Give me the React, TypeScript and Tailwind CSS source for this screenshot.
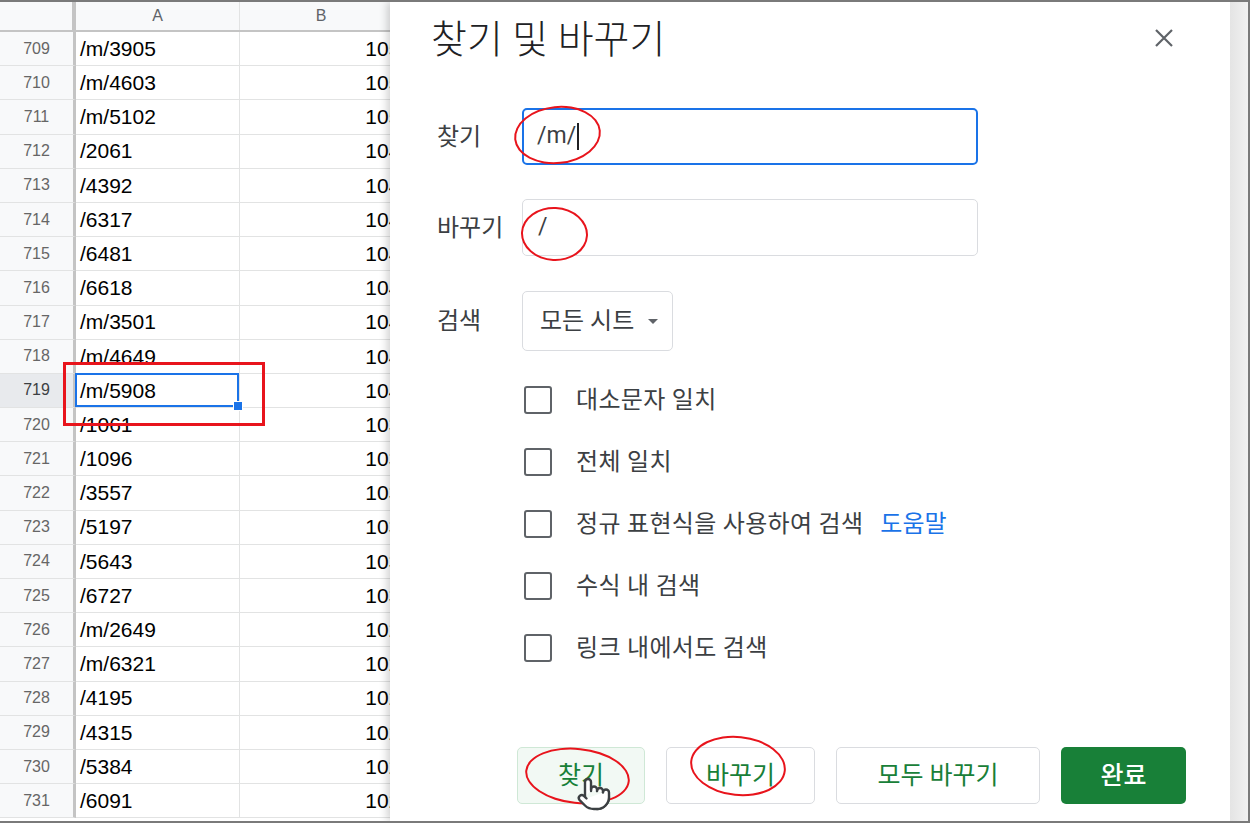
import React from "react";
import { Pointer } from "lucide-react";

// --- SHEET DATA ---
const ROWS: [number, string, string][] = [
  [709, "/m/3905", "1054"],
  [710, "/m/4603", "1053"],
  [711, "/m/5102", "1053"],
  [712, "/2061", "1048"],
  [713, "/4392", "1047"],
  [714, "/6317", "1047"],
  [715, "/6481", "1046"],
  [716, "/6618", "1046"],
  [717, "/m/3501", "1045"],
  [718, "/m/4649", "1044"],
  [719, "/m/5908", "1044"],
  [720, "/1061", "1032"],
  [721, "/1096", "1032"],
  [722, "/3557", "1031"],
  [723, "/5197", "1031"],
  [724, "/5643", "1030"],
  [725, "/6727", "1030"],
  [726, "/m/2649", "1029"],
  [727, "/m/6321", "1029"],
  [728, "/4195", "1028"],
  [729, "/4315", "1028"],
  [730, "/5384", "1027"],
  [731, "/6091", "1027"],
];

const OPTIONS = ["대소문자 일치", "전체 일치", "정규 표현식을 사용하여 검색", "수식 내 검색", "링크 내에서도 검색"];

export default function App() {
  return (
    <div className="relative h-[823px] w-[1250px] overflow-hidden border-y-2 border-r-2 border-[#7a7a7a] bg-white">
      {/* SPREADSHEET */}
      <Sheet />

      {/* red box on sheet */}
      <div className="absolute left-[63px] top-[360px] z-20 h-[64px] w-[202px] border-[3px] border-[#e8141c]" />

      {/* FIND & REPLACE DIALOG */}
      <div className="absolute bottom-0 left-[390px] right-0 top-0 z-30 flex shadow-[-3px_0_8px_rgba(0,0,0,0.18)]">
        <div className="flex flex-1 flex-col bg-white font-[Roboto,'Noto_Sans_CJK_KR',sans-serif]">
          <div className="mt-[14px] flex h-[48px] items-center justify-between pl-[41px] pr-[56px]">
            <h2 className="text-[39px] font-light leading-[48px] text-[#202124]">찾기 및 바꾸기</h2>
            <svg width="20" height="20" viewBox="0 0 20 20" className="mt-[-4px]">
              <path d="M2 2L18 18M18 2L2 18" stroke="#5f6368" strokeWidth="2.2" />
            </svg>
          </div>

          {/* find */}
          <div className="mt-[44px] flex items-center pl-[47px]">
            <span className="w-[85px] text-[24px] text-[#3c4043]">찾기</span>
            <div className="flex h-[57px] w-[456px] items-center rounded-[5px] border-2 border-[#1a73e8] pl-[13px] text-[23px] text-[#3c4043]">
              /m/<span className="ml-[1px] inline-block h-[27px] w-[1.5px] bg-[#202124]" />
            </div>
          </div>

          {/* replace */}
          <div className="mt-[34px] flex items-center pl-[47px]">
            <span className="w-[85px] text-[24px] text-[#3c4043]">바꾸기</span>
            <div className="flex h-[57px] w-[456px] items-center rounded-[5px] border border-[#dadce0] pl-[15px] text-[23px] text-[#3c4043]">
              /
            </div>
          </div>

          {/* search scope */}
          <div className="mt-[35px] flex items-center pl-[47px]">
            <span className="w-[85px] text-[24px] text-[#3c4043]">검색</span>
            <div className="flex h-[60px] w-[151px] items-center rounded-[5px] border border-[#dadce0] pl-[17px] text-[24px] text-[#3c4043]">
              모든 시트
              <svg width="10" height="5" viewBox="0 0 10 5" className="ml-[14px]">
                <path d="M0 0h10L5 5z" fill="#5f6368" />
              </svg>
            </div>
          </div>

          {/* options */}
          <div className="mt-[29px] flex flex-col gap-[22px] pl-[134px]">
            {OPTIONS.map((label, i) => (
              <div key={label} className="flex h-[40px] items-center">
                <div className="h-[28px] w-[28px] rounded-[3px] border-2 border-[#5f6368]" />
                <span className="ml-[24px] text-[24px] tracking-[0.3px] text-[#3c4043]">{label}</span>
                {i === 2 && <span className="ml-[17px] text-[24px] text-[#1a73e8]">도움말</span>}
              </div>
            ))}
          </div>

          {/* buttons */}
          <div className="mt-[79px] flex gap-[21px] pl-[127px]">
            <button className="h-[57px] w-[128px] rounded-[5px] border border-[#cfe8d6] bg-[#f2f9f4] text-[25px] text-[#188038]">
              찾기
            </button>
            <button className="h-[57px] w-[149px] rounded-[5px] border border-[#dadce0] bg-white text-[25px] text-[#188038]">
              바꾸기
            </button>
            <button className="h-[57px] w-[204px] rounded-[5px] border border-[#dadce0] bg-white text-[25px] text-[#188038]">
              모두 바꾸기
            </button>
            <button className="h-[57px] w-[125px] rounded-[5px] bg-[#188038] text-[25px] font-medium text-white">
              완료
            </button>
          </div>
        </div>
        {/* scroll strip */}
        <div className="w-[18px] bg-gradient-to-r from-[#e4e4e4] to-[#f1f1f1]" />
      </div>

      {/* annotation ellipses */}
      <div className="absolute left-[514px] top-[104px] z-40 h-[58px] w-[87px] -rotate-6 rounded-[50%] border-2 border-[#e8141c]" />
      <div className="absolute left-[521px] top-[205px] z-40 h-[54px] w-[67px] rotate-3 rounded-[50%] border-2 border-[#e8141c]" />
      <div className="absolute left-[525px] top-[746px] z-40 h-[56px] w-[105px] rotate-6 rounded-[50%] border-2 border-[#e8141c]" />
      <div className="absolute left-[690px] top-[734px] z-40 h-[60px] w-[96px] rotate-6 rounded-[50%] border-2 border-[#e8141c]" />

      {/* mouse pointer */}
      <Pointer size={36} strokeWidth={1.6} fill="white" color="#3c4043" className="absolute left-[576px] top-[774px] z-50" />
    </div>
  );
}

// --- SUB-COMPONENTS ---

function Sheet() {
  return (
    <div className="font-['Liberation_Sans',Arial,sans-serif]">
      <div className="flex h-[30px] border-b-2 border-[#c4c4c4] bg-[#f8f9fa] text-[16px] text-[#5f6368]">
        <div className="w-[76px] border-r-[4px] border-[#c4c4c4]" />
        <div className="flex w-[164px] items-center justify-center border-r border-[#e2e3e3]">A</div>
        <div className="flex w-[177px] items-center justify-center border-r border-[#e2e3e3] pr-[14px]">B</div>
      </div>
      {ROWS.map(([n, a, b]) => {
        const sel = n === 719;
        return (
          <div key={n} className="flex h-[34.2px]">
            <div
              className={`flex w-[76px] items-center justify-center border-b border-r-[3px] border-b-[#e2e3e3] border-r-[#c4c4c4] text-[16px] ${
                sel ? "bg-[#e8eaed] text-[#3c4043]" : "bg-[#f8f9fa] text-[#666666]"
              }`}
            >
              {n}
            </div>
            <div className="relative flex w-[164px] items-center border-b border-r border-[#e2e3e3] pl-[4px] text-[21px] text-black">
              {a}
              {sel && (
                <div className="absolute -left-[1px] -top-[1px] bottom-0 right-0 z-10 border-2 border-[#1a73e8]">
                  <div className="absolute -bottom-[6px] -right-[6px] h-[10px] w-[10px] border border-white bg-[#1a73e8]" />
                </div>
              )}
            </div>
            <div className="flex w-[177px] items-center justify-end border-b border-r border-[#e2e3e3] pr-[4px] text-[21px] text-black">
              {b}
            </div>
          </div>
        );
      })}
    </div>
  );
}
